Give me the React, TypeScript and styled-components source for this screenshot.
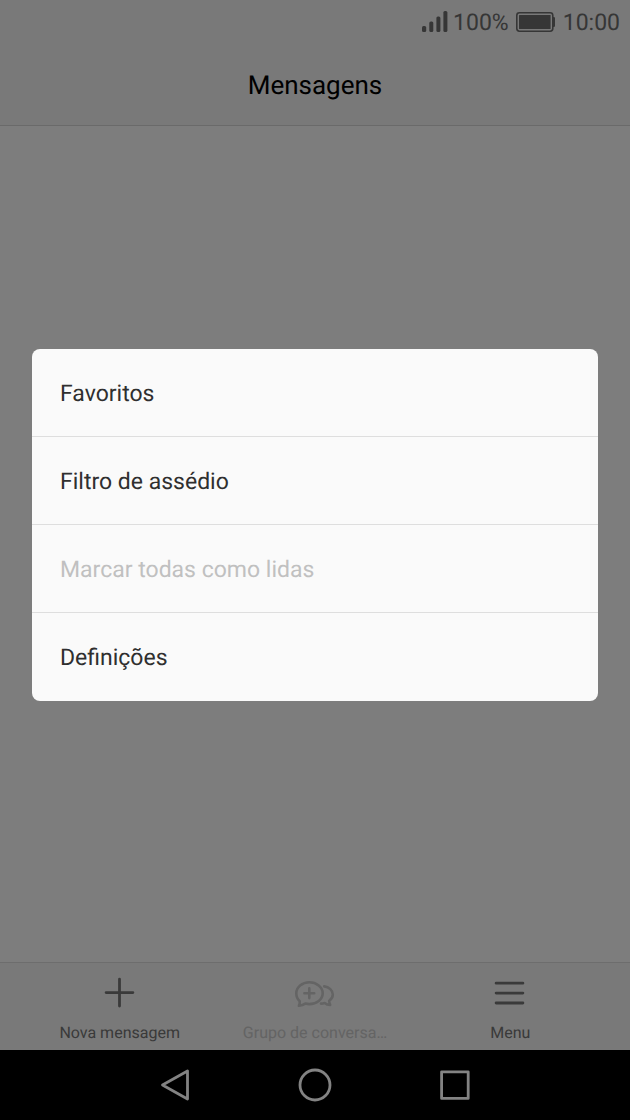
import React from "react";
import styled, { createGlobalStyle } from "styled-components";

const GlobalStyle = createGlobalStyle`
  *, *::before, *::after { box-sizing: border-box; }
  body { margin: 0; background: #000; font-family: Roboto, sans-serif; text-rendering: geometricPrecision; }
  button { border: 0; background: none; padding: 0; margin: 0; font: inherit; color: inherit; text-rendering: inherit; }
  svg { display: block; }
`;

const Device = styled.div`
  display: flex;
  flex-direction: column;
  min-height: 100vh;
`;

const Screen = styled.div`
  position: relative;
  flex: 1;
  display: flex;
  flex-direction: column;
  background: #fafafa;
`;

const TopArea = styled.header`
  background: #f2f2f2;
  border-bottom: 1px solid #d4d4d4;
`;

const StatusBar = styled.div`
  display: flex;
  align-items: center;
  justify-content: flex-end;
  height: 44px;
  padding: 0 10px;
  font-size: 23px;
  line-height: 28px;
  color: #6c6c6c;
`;

const StatusText = styled.span<{ $gap: number }>`
  margin-left: ${({ $gap }) => $gap}px;
  padding-top: 1px;
`;

const BatteryIcon = styled.svg`
  margin-left: 7px;
`;

const Title = styled.h1`
  margin: 0;
  height: 81px;
  padding-top: 2px;
  font-size: 26px;
  font-weight: 400;
  line-height: 80px;
  text-align: center;
  color: #000;
`;

const Conversations = styled.main`
  flex: 1;
`;

const Toolbar = styled.footer`
  display: grid;
  grid-template-columns: repeat(3, minmax(0, 1fr));
  height: 88px;
  padding: 0 22px;
  background: #f2f2f2;
  border-top: 1px solid #dadada;
`;

const ToolButton = styled.button`
  display: flex;
  flex-direction: column;
  align-items: center;
  padding-top: 10px;
  font-size: 16px;
  line-height: 20px;
  color: #747474;

  &:disabled { color: #c8c8c8; }
`;

const ToolLabel = styled.span`
  margin-top: 10px;
  white-space: nowrap;
`;

const Scrim = styled.div`
  position: absolute;
  inset: 0;
  display: flex;
  align-items: center;
  justify-content: center;
  padding: 0 32px;
  background: rgba(0, 0, 0, 0.5);
`;

const Menu = styled.div`
  width: 100%;
  overflow: hidden;
  border-radius: 8px;
  background: #fafafa;
`;

const MenuItem = styled.button`
  display: block;
  width: 100%;
  height: 88px;
  padding: 2px 28px 0;
  font-size: 23px;
  line-height: 28px;
  text-align: left;
  color: #2f2f2f;
  border-bottom: 1px solid #dedede;

  &:last-child { border-bottom-color: transparent; }
  &:disabled { color: #c0c0c0; }
`;

const NavBar = styled.nav`
  display: grid;
  grid-template-columns: repeat(3, 1fr);
  height: 70px;
  padding: 0 calc(100% / 6);
  background: #000;
  color: #838383;
`;

const NavButton = styled.button`
  display: flex;
  align-items: center;
  justify-content: center;
`;

const menuItems = [
  { label: "Favoritos" },
  { label: "Filtro de assédio" },
  { label: "Marcar todas como lidas", disabled: true },
  { label: "Definições" },
];

export default function App() {
  return (
    <>
      <GlobalStyle />
      <Device>
        <Screen>
          <TopArea>
            <StatusBar>
              <svg width="26" height="22" viewBox="0 0 26 22" fill="currentColor" aria-hidden="true">
                <rect x="0" y="15" width="4.2" height="6" rx="1.5" />
                <rect x="7.3" y="10.5" width="4" height="10.5" rx="1.5" />
                <rect x="14.4" y="5.5" width="4" height="15.5" rx="1.5" />
                <rect x="21.4" y="0" width="4" height="21" rx="1.5" />
              </svg>
              <StatusText $gap={5}>100%</StatusText>
              <BatteryIcon width="39" height="20" viewBox="0 0 39 20" fill="none" aria-hidden="true">
                <rect x="0.8" y="0.8" width="36" height="18.4" rx="2.6" stroke="currentColor" strokeWidth="1.6" />
                <rect x="3" y="3" width="31.6" height="14" rx="0.5" fill="currentColor" />
                <path d="M37 5h.8a1.2 1.2 0 0 1 1.2 1.2v7.6a1.2 1.2 0 0 1-1.2 1.2H37z" fill="currentColor" />
              </BatteryIcon>
              <StatusText $gap={8}>10:00</StatusText>
            </StatusBar>
            <Title>Mensagens</Title>
          </TopArea>
          <Conversations />
          <Toolbar>
            <ToolButton type="button">
              <svg width="40" height="40" viewBox="0 0 40 40" stroke="currentColor" strokeWidth="2.8" strokeLinecap="round" aria-hidden="true">
                <path d="M19.5 6.2v26.8M6.1 19.6h26.8" />
              </svg>
              <ToolLabel>Nova mensagem</ToolLabel>
            </ToolButton>
            <ToolButton type="button" disabled>
              <svg width="40" height="40" viewBox="0 0 40 40" fill="none" stroke="currentColor" strokeWidth="2.6" strokeLinecap="round" strokeLinejoin="round" aria-hidden="true">
                <path d="M4.7 28.2C2.3 26.1 1.3 23.2 1.3 20.2c0-6 5.8-10.9 13-10.9s13.4 4.9 13.4 10.9-6 10.9-13.4 10.9c-1.4 0-2.7-.2-4-.5-1.7 1.2-3.4 1.9-6.4 2.2.8-1.6 1-3 .8-4.6z" />
                <path d="M14.3 15.3v9.8M9.4 20.2h9.8M29.2 13.4c4.9.4 8.6 4 8.6 8.2 0 2.6-1.4 4.8-3.6 6.3.1 1.5.3 2.9 1 4.1-2.3-.1-4.2-.9-5.5-2-1.2.4-2.5.6-3.7.6" />
              </svg>
              <ToolLabel>Grupo de conversa…</ToolLabel>
            </ToolButton>
            <ToolButton type="button">
              <svg width="40" height="40" viewBox="0 0 40 40" stroke="currentColor" strokeWidth="2.8" strokeLinecap="round" aria-hidden="true">
                <path d="M6.1 10.2h26.8M6.1 20.1h26.8M6.1 30h26.8" />
              </svg>
              <ToolLabel>Menu</ToolLabel>
            </ToolButton>
          </Toolbar>
          <Scrim>
            <Menu role="menu" aria-label="Menu">
              {menuItems.map((item) => (
                <MenuItem key={item.label} type="button" role="menuitem" disabled={item.disabled}>
                  {item.label}
                </MenuItem>
              ))}
            </Menu>
          </Scrim>
        </Screen>
        <NavBar>
          <NavButton type="button" aria-label="Voltar">
            <svg width="34" height="34" viewBox="0 0 34 34" fill="none" stroke="currentColor" strokeWidth="2.8" strokeLinejoin="round" aria-hidden="true">
              <path d="M29.5 3v28L4.5 17z" />
            </svg>
          </NavButton>
          <NavButton type="button" aria-label="Início">
            <svg width="34" height="34" viewBox="0 0 34 34" fill="none" stroke="currentColor" strokeWidth="2.8" aria-hidden="true">
              <circle cx="17" cy="17" r="15" />
            </svg>
          </NavButton>
          <NavButton type="button" aria-label="Recentes">
            <svg width="34" height="34" viewBox="0 0 34 34" fill="none" stroke="currentColor" strokeWidth="2.8" strokeLinejoin="round" aria-hidden="true">
              <rect x="3.6" y="3.8" width="26.6" height="26.6" />
            </svg>
          </NavButton>
        </NavBar>
      </Device>
    </>
  );
}
